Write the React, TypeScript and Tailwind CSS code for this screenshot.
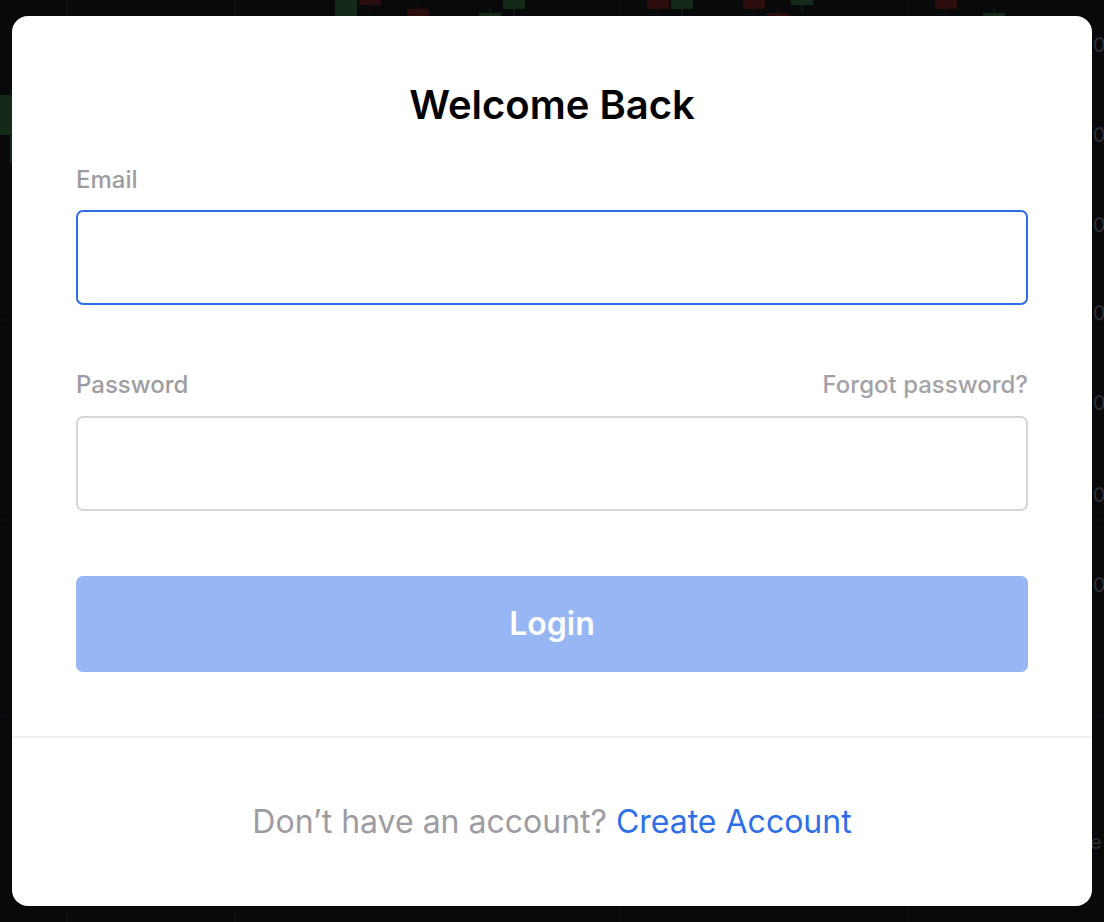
import React from "react";

// faint chart behind the dialog overlay
const candles: { x: number; y: number; h: number; up: boolean }[] = [
  { x: 335, y: 0, h: 16, up: true },
  { x: 359, y: 0, h: 5, up: false },
  { x: 407, y: 9, h: 8, up: false },
  { x: 479, y: 13, h: 4, up: true },
  { x: 503, y: 0, h: 9, up: true },
  { x: 647, y: 0, h: 9, up: false },
  { x: 671, y: 0, h: 9, up: true },
  { x: 743, y: 0, h: 9, up: false },
  { x: 767, y: 13, h: 4, up: false },
  { x: 791, y: 0, h: 5, up: true },
  { x: 935, y: 0, h: 9, up: false },
  { x: 983, y: 13, h: 4, up: true },
  { x: 0, y: 95, h: 40, up: true },
];

function ChartBackdrop() {
  return (
    <svg className="absolute inset-0" width="1104" height="922" viewBox="0 0 1104 922">
      <rect width="1104" height="922" fill="#07090b" />
      {[67, 235, 620, 908].map((x) => (
        <line key={x} x1={x} y1={0} x2={x} y2={922} stroke="#101216" strokeWidth="1" />
      ))}
      {[127, 320, 520, 716].map((y) => (
        <line key={y} x1={0} y1={y} x2={1104} y2={y} stroke="#101216" strokeWidth="1" />
      ))}
      {candles.map((c, i) => (
        <g key={i}>
          <line
            x1={c.x + 11}
            y1={Math.max(0, c.y - 6)}
            x2={c.x + 11}
            y2={c.y + c.h + 8}
            stroke={c.up ? "#14281a" : "#2a0f0f"}
            strokeWidth="1"
          />
          <rect x={c.x} y={c.y} width={c.x === 0 ? 12 : 22} height={c.h} fill={c.up ? "#152918" : "#2b0d0d"} />
        </g>
      ))}
      <rect x={10} y={135} width={2} height={28} fill="#152918" />
      {[45, 135, 225, 313, 403, 495, 585].map((y) => (
        <text key={y} x={1093} y={y + 7} fill="#2e2f33" fontSize="20" fontFamily="Inter, sans-serif">
          0
        </text>
      ))}
      <text x={1090} y={849} fill="#2e2f33" fontSize="20" fontFamily="Inter, sans-serif">
        e
      </text>
    </svg>
  );
}

export default function App() {
  return (
    <div className="relative h-[922px] w-[1104px] overflow-hidden font-['Inter',sans-serif]">
      <ChartBackdrop />
      <div className="relative pt-[16px] pl-[12px]">
        <div className="flex h-[890px] w-[1080px] flex-col rounded-[16px] bg-white">
          <div className="px-[64px] pt-[65px]">
            <h1 className="text-center text-[40px] font-semibold leading-[48px] text-black">Welcome Back</h1>

            <label className="mt-[37px] block text-[24px] font-medium leading-[28px] text-[#9d9ca3]">Email</label>
            <input
              type="email"
              className="mt-[16px] block h-[95px] w-full rounded-[7px] border-2 border-[#2d6ee6] bg-white px-4 text-[22px] outline-none"
            />

            <div className="mt-[66px] flex items-center justify-between">
              <label className="text-[24px] font-medium leading-[28px] text-[#9d9ca3]">Password</label>
              <span className="text-[24px] font-medium leading-[28px] text-[#a3a2a8]">Forgot password?</span>
            </div>
            <input
              type="password"
              className="mt-[17px] block h-[95px] w-full rounded-[7px] border-2 border-[#d6d6d8] bg-white px-4 text-[22px] outline-none"
            />

            <button className="mt-[65px] flex h-[96px] w-full items-center justify-center rounded-[7px] bg-[#97b6f4] text-[32px] font-semibold text-white">
              Login
            </button>
          </div>

          <div className="mt-[64px] h-[2px] w-full bg-[#f1f1f4]" />

          <p className="mt-[64px] text-center text-[32px] leading-[40px] text-[#9d9ca3]">
            Don’t have an account? <span className="text-[#2e6fe8]">Create Account</span>
          </p>
        </div>
      </div>
    </div>
  );
}
